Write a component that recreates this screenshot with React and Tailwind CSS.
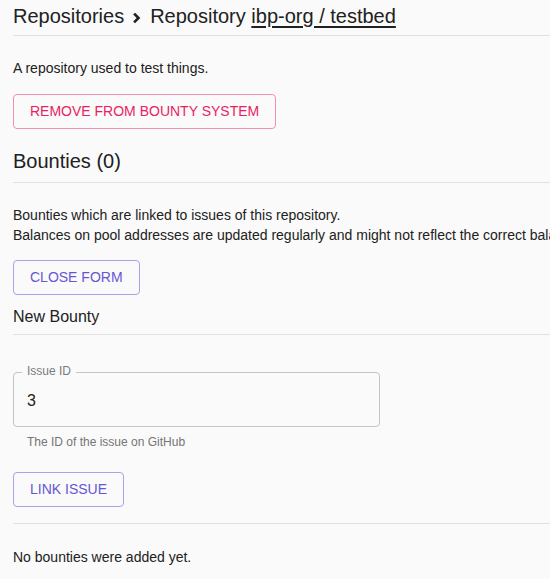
import React, { useState } from 'react';

const Chevron = () => (
  <svg className="w-[10px] h-[12px] mx-[8px] mt-[3px]" viewBox="0 0 10 12" fill="none" stroke="#212121" strokeWidth="2.6" strokeLinecap="square">
    <path d="M3 2.5l3.5 3.5L3 9.5" />
  </svg>
);

const App = () => {
  const [issueId, setIssueId] = useState('3');

  return (
    <div className="min-h-screen overflow-hidden bg-[#fafafa] text-[#212121] font-['Liberation_Sans',Arial,sans-serif]">
      <div className="w-[760px] pl-[13px]">

        {/* Breadcrumb header */}
        <div className="pt-[2px] pb-[5px] border-b border-[#e0e0e0]">
          <h1 className="flex items-center text-[20px] leading-[28px]">
            <span>Repositories</span>
            <Chevron />
            <span>Repository&nbsp;</span>
            <span className="underline underline-offset-[3px]">ibp-org / testbed</span>
          </h1>
        </div>

        <p className="mt-[22px] text-[14px] leading-5">A repository used to test things.</p>

        <button className="mt-[16px] block px-[16px] py-[7px] text-[14px] leading-[19px] border border-[#f48fb1] rounded-[4px] text-[#e91e63] uppercase">
          Remove from bounty system
        </button>

        {/* Bounties */}
        <div className="mt-[18px] pb-[7px] border-b border-[#e0e0e0]">
          <h2 className="text-[20px] leading-[28px]">Bounties (0)</h2>
        </div>

        <p className="mt-[22px] text-[14px] leading-5 whitespace-nowrap">
          Bounties which are linked to issues of this repository.
          <br />
          Balances on pool addresses are updated regularly and might not reflect the correct balance.
        </p>

        <button className="mt-[15px] block px-[16px] py-[7px] text-[14px] leading-[19px] border border-[#aaa2ea] rounded-[4px] text-[#6656d4] uppercase">
          Close form
        </button>

        <div className="mt-[10px] pb-[5px] border-b border-[#e0e0e0]">
          <h3 className="text-[16px] leading-6">New Bounty</h3>
        </div>

        {/* Issue ID field */}
        <div className="mt-[37px] relative w-[367px] border border-[#c4c4c4] rounded-[4px] pl-[13px] pt-[16px] pb-[13px]">
          <span className="absolute left-[8px] -top-[9px] px-[5px] bg-[#fafafa] text-[12px] leading-[14px] text-[#7a7a7a]">
            Issue ID
          </span>
          <input
            value={issueId}
            onChange={(e) => setIssueId(e.target.value)}
            className="block w-full bg-transparent outline-none text-[16px] leading-6 text-[#212121]"
          />
        </div>
        <p className="mt-[7px] pl-[14px] text-[12px] leading-4 text-[#757575]">The ID of the issue on GitHub</p>

        <button className="mt-[22px] block px-[16px] py-[7px] text-[14px] leading-[19px] border border-[#aaa2ea] rounded-[4px] text-[#6656d4] uppercase">
          Link issue
        </button>

        <div className="mt-[16px] border-t border-[#e0e0e0]"></div>

        <p className="mt-[23px] text-[14px] leading-5">No bounties were added yet.</p>
      </div>
    </div>
  );
};

export default App;
